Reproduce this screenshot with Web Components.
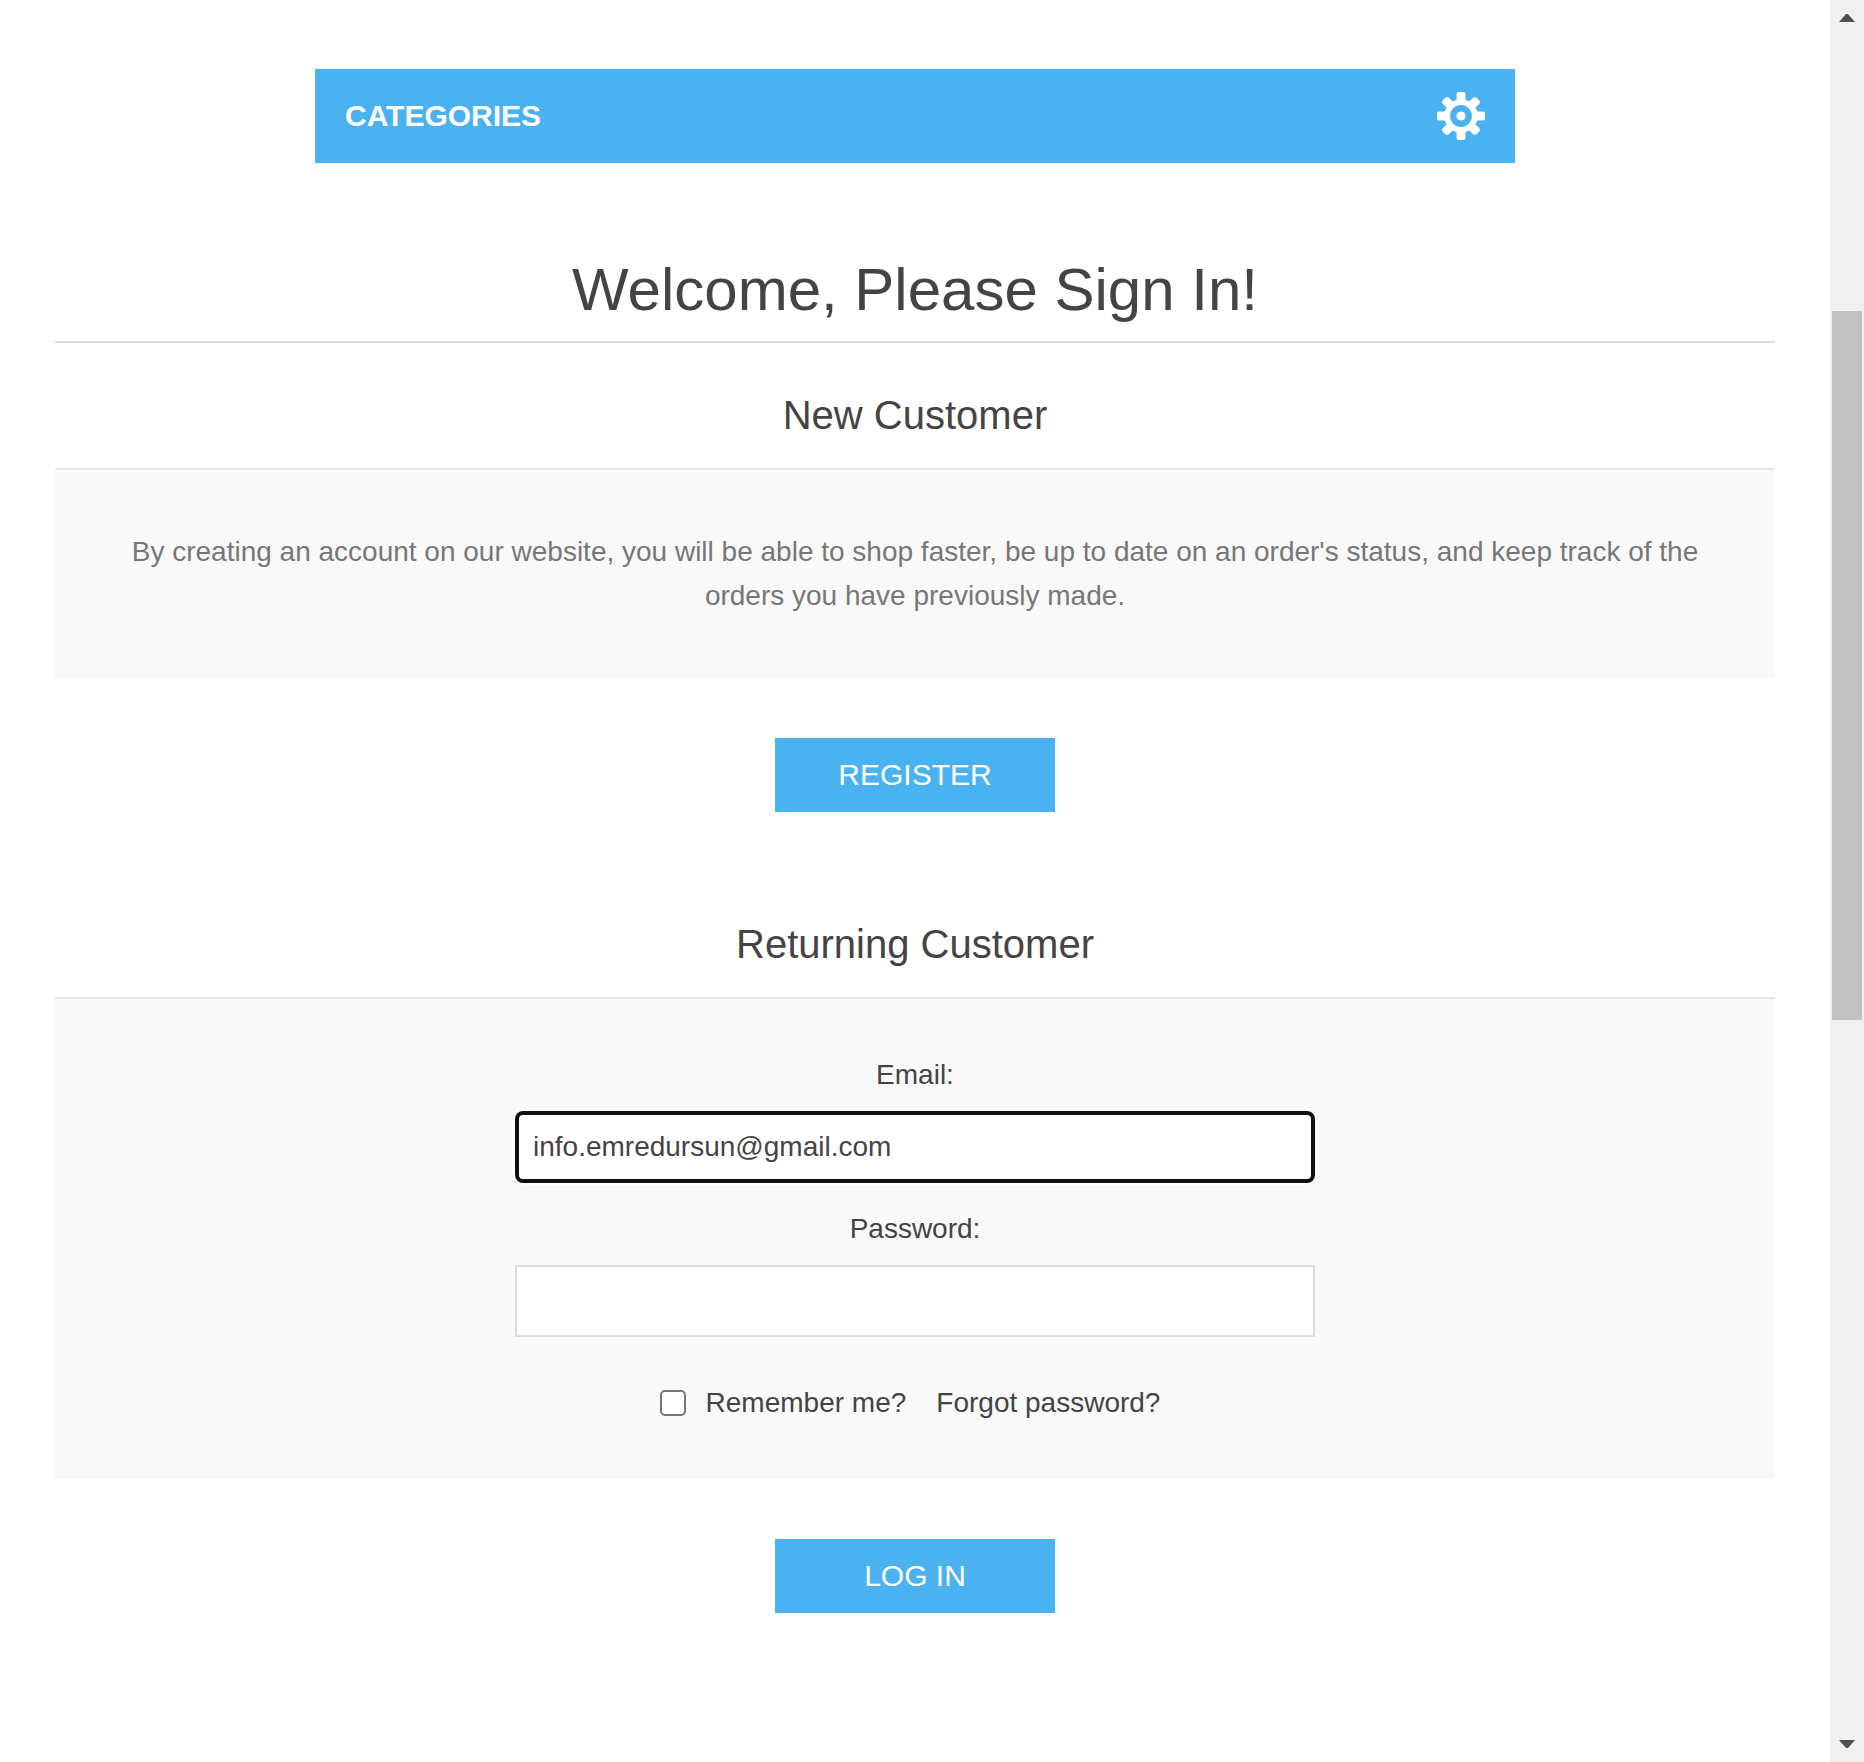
<!DOCTYPE html>
<html lang="en">
<head>
<meta charset="utf-8">
<title>Sign In</title>
<style>
html, body { margin: 0; height: 100%; overflow: hidden; background: #fff; }
body { font-family: "Liberation Sans", Arial, sans-serif; color: #444; }
</style>
</head>
<body>
<login-page></login-page>
<script>
const define = (name, html) => {
  const template = document.createElement('template');
  template.innerHTML = html;
  customElements.define(name, class extends HTMLElement {
    constructor() {
      super();
      this.attachShadow({ mode: 'open' }).append(template.content.cloneNode(true));
    }
  });
};

define('gear-icon', `
<style>:host{display:block;width:48px;height:48px}svg{display:block}</style>
<svg width="48" height="48" viewBox="-24 -24 48 48">
  <g fill="#fff">
    <rect x="-4.4" y="-24" width="8.8" height="11" rx="2"/>
    <rect x="-4.4" y="13" width="8.8" height="11" rx="2"/>
    <rect x="-24" y="-4.4" width="11" height="8.8" rx="2"/>
    <rect x="13" y="-4.4" width="11" height="8.8" rx="2"/>
    <g transform="rotate(45)">
      <rect x="-4.3" y="-24" width="8.6" height="11" rx="3"/>
      <rect x="-4.3" y="13" width="8.6" height="11" rx="3"/>
      <rect x="-24" y="-4.3" width="11" height="8.6" rx="3"/>
      <rect x="13" y="-4.3" width="11" height="8.6" rx="3"/>
    </g>
    <circle r="4.6"/>
  </g>
  <circle r="13.8" fill="none" stroke="#fff" stroke-width="5.8"/>
</svg>`);

define('category-bar', `
<style>
:host{display:flex;align-items:center;justify-content:space-between;box-sizing:border-box;width:1200px;height:94px;padding:0 30px;background:#4ab2f1;color:#fff;font-size:30px;font-weight:bold}
</style>
<span><slot></slot></span><gear-icon></gear-icon>`);

define('page-title', `
<style>
:host{display:block;align-self:stretch;border-bottom:2px solid #ddd}
h1{margin:0 0 16px;font-size:60px;font-weight:normal;line-height:70px;text-align:center}
</style>
<h1><slot></slot></h1>`);

define('customer-section', `
<style>
:host{display:flex;flex-direction:column;align-items:center;align-self:stretch}
h2{margin:0 0 28px;font-size:40px;font-weight:normal;line-height:50px}
.panel{align-self:stretch;box-sizing:border-box;border-top:2px solid #e6e6e6;background:#f9f9f9;padding:60px;font-size:28px;line-height:44px;text-align:center}
</style>
<h2><slot name="heading"></slot></h2>
<div class="panel"><slot></slot></div>
<slot name="action"></slot>`);

define('action-button', `
<style>
:host{display:block;margin-top:60px}
button{display:block;width:280px;height:74px;margin:0;padding:0;border:0;background:#4ab2f1;color:#fff;font:30px "Liberation Sans",Arial,sans-serif}
</style>
<button type="button"><slot></slot></button>`);

define('form-field', `
<style>
:host{display:flex;flex-direction:column;align-items:center;width:800px}
label{line-height:44px;margin-bottom:14px}
.box{display:flex;align-items:center;box-sizing:border-box;width:800px;height:72px;padding:0 16px;border:2px solid #ddd;background:#fff;line-height:32px}
:host([focused]) .box{border:4px solid #101010;border-radius:8px;padding:0 14px;box-shadow:0 0 0 2px #fff}
</style>
<label><slot name="label"></slot></label>
<div class="box"><slot></slot></div>`);

define('remember-row', `
<style>
:host{display:flex;align-items:center;margin:44px 0 0 -10px;line-height:44px}
i{box-sizing:border-box;width:26px;height:26px;margin:0 20px 0 0;border:2px solid #767676;border-radius:5px;background:#fff}
.link{margin-left:30px}
</style>
<i role="checkbox" aria-checked="false"></i><span><slot></slot></span><span class="link"><slot name="link"></slot></span>`);

define('login-form', `
<style>
:host{display:flex;flex-direction:column;align-items:center;margin:-6px 0}
form-field+form-field{margin-top:24px}
</style>
<form-field focused><span slot="label">Email:</span>info.emredursun@gmail.com</form-field>
<form-field><span slot="label">Password:</span></form-field>
<remember-row>Remember me?<span slot="link">Forgot password?</span></remember-row>`);

define('scroll-rail', `
<style>
:host{display:flex;flex-direction:column;align-items:center;box-sizing:border-box;width:34px;height:1762px;padding:14px 0;background:#f0f0f0}
svg{display:block;fill:#505050}
.thumb{width:30px;height:709px;margin:289px 0 720px;background:#c1c1c1}
</style>
<svg width="16" height="8"><path d="M0 8L7 0h2l7 8z"/></svg>
<div class="thumb"></div>
<svg width="16" height="8"><path d="M0 0h16L9 8H7z"/></svg>`);

define('login-page', `
<style>
:host{display:flex;width:1864px;height:1762px;background:#fff}
main{display:flex;flex-direction:column;align-items:center;box-sizing:border-box;width:1830px;padding:69px 55px 0}
page-title{margin-top:92px}
.new{margin-top:47px;color:#777}
.new [slot=heading]{color:#444}
.returning{margin-top:107px}
</style>
<main>
  <category-bar>CATEGORIES</category-bar>
  <page-title>Welcome, Please Sign In!</page-title>
  <customer-section class="new">
    <span slot="heading">New Customer</span>
    By creating an account on our website, you will be able to shop faster, be up to date on an order's status, and keep track of the orders you have previously made.
    <action-button slot="action">REGISTER</action-button>
  </customer-section>
  <customer-section class="returning">
    <span slot="heading">Returning Customer</span>
    <login-form></login-form>
    <action-button slot="action">LOG IN</action-button>
  </customer-section>
</main>
<scroll-rail></scroll-rail>`);
</script>
</body>
</html>
